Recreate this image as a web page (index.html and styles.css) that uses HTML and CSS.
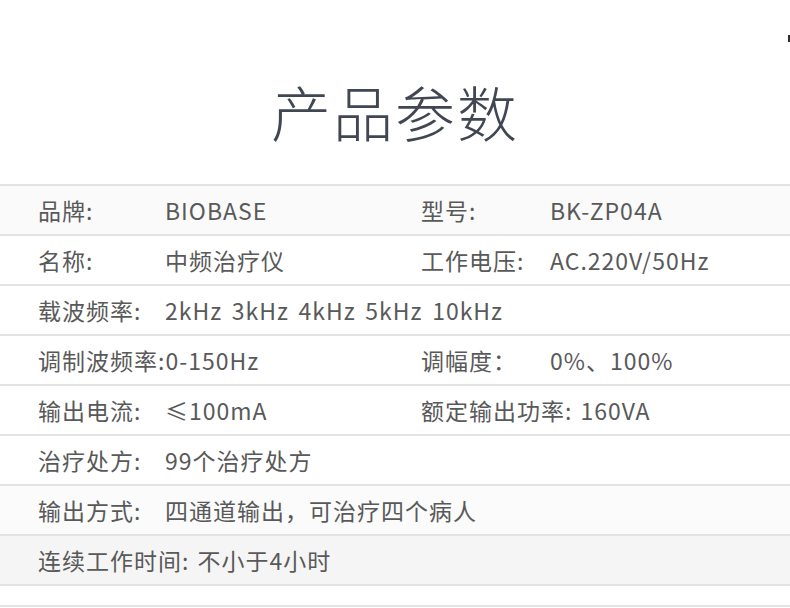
FILE: index.html
```html
<!DOCTYPE html>
<html lang="zh-CN">
<head>
<meta charset="utf-8">
<title>产品参数</title>
<link rel="stylesheet" href="styles.css">
</head>
<body>
<div class="page">
  <span class="edge-mark"></span>
  <header class="header">
    <h1 class="title">产品参数</h1>
  </header>
  <div class="specs">
    <div class="row row-shade">
      <div class="cell"><span class="label">品牌:</span><span class="value">BIOBASE</span></div>
      <div class="cell cell-right"><span class="label label-r">型号:</span><span class="value">BK-ZP04A</span></div>
    </div>
    <div class="row">
      <div class="cell"><span class="label">名称:</span><span class="value">中频治疗仪</span></div>
      <div class="cell cell-right"><span class="label label-r">工作电压:</span><span class="value">AC.220V/50Hz</span></div>
    </div>
    <div class="row">
      <div class="cell cell-wide"><span class="label">载波频率:</span><span class="value value-words">2kHz 3kHz 4kHz 5kHz 10kHz</span></div>
    </div>
    <div class="row">
      <div class="cell"><span class="label">调制波频率:</span><span class="value">0-150Hz</span></div>
      <div class="cell cell-right"><span class="label label-r">调幅度：</span><span class="value">0%、100%</span></div>
    </div>
    <div class="row">
      <div class="cell"><span class="label">输出电流:</span><span class="value">≤100mA</span></div>
      <div class="cell cell-right"><span class="label label-r">额定输出功率:</span><span class="value value-gap">160VA</span></div>
    </div>
    <div class="row">
      <div class="cell cell-wide"><span class="label">治疗处方:</span><span class="value">99个治疗处方</span></div>
    </div>
    <div class="row row-faint">
      <div class="cell cell-wide"><span class="label">输出方式:</span><span class="value">四通道输出，可治疗四个病人</span></div>
    </div>
    <div class="row row-gray">
      <div class="cell cell-wide"><span class="label">连续工作时间:</span><span class="value value-gap">不小于4小时</span></div>
    </div>
    <div class="row-end"></div>
  </div>
</div>
</body>
</html>
```
FILE: styles.css
```css
html, body {
  margin: 0;
  padding: 0;
  background: #ffffff;
}

.page {
  position: relative;
  width: 790px;
  height: 608px;
  overflow: hidden;
  font-family: "Noto Sans CJK SC", "Noto Sans", sans-serif;
}

.edge-mark {
  position: absolute;
  right: 0;
  top: 35px;
  width: 2px;
  height: 7px;
  background: #2e2e2e;
}

.header {
  height: 184px;
  box-sizing: border-box;
  padding-top: 76px;
  text-align: center;
}

.title {
  margin: 0;
  font-size: 60px;
  line-height: 70px;
  font-weight: 300;
  letter-spacing: 2px;
  color: #414653;
}

.specs {
  display: flex;
  flex-direction: column;
}

.row {
  display: grid;
  grid-template-columns: 383px 1fr;
  height: 50px;
  box-sizing: border-box;
  border-top: 2px solid #e3e3e3;
  align-items: center;
  font-size: 23px;
  letter-spacing: 1px;
  color: #595959;
}

.row-shade { background: #fafafa; }
.row-faint { background: #fbfbfb; }
.row-gray { background: #f5f5f5; }

.row-end {
  height: 23px;
  box-sizing: border-box;
  border-top: 2px solid #e3e3e3;
  border-bottom: 2px solid #e3e3e3;
}

.cell {
  display: flex;
  align-items: baseline;
  padding-left: 38px;
  white-space: nowrap;
}

.cell-wide { grid-column: 1 / span 2; }

.label {
  display: inline-block;
  min-width: 127px;
}

.label-r { min-width: 129px; }

.value-words { word-spacing: 3.5px; }

.value-gap { margin-left: 8px; }
```
